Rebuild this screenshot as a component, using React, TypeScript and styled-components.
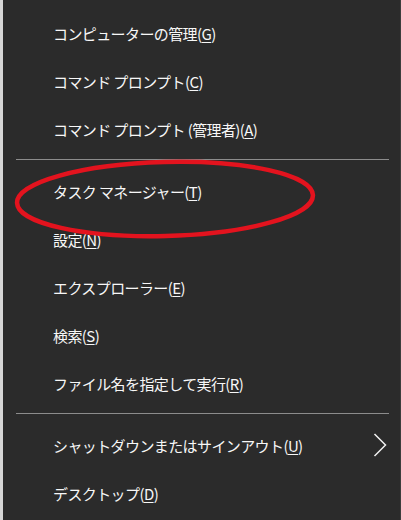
import styled, { createGlobalStyle } from "styled-components";

const GlobalStyle = createGlobalStyle`
    html, body {
        margin: 0;
        padding: 0;
        background: #2b2b2b;
    }
`;

const Menu = styled.div`
    position: relative;
    box-sizing: border-box;
    width: 401px;
    height: 520px;
    padding-top: 9px;
    background: #2b2b2b;
    border-left: 3px solid #d6d6d6;
    border-right: 1px solid #3d3d3d;
    font-family: "Noto Sans CJK JP", "Noto Sans", sans-serif;
    overflow: hidden;
`;

const Item = styled.div`
    display: flex;
    align-items: center;
    justify-content: space-between;
    height: 48px;
    padding: 0 13px 0 50px;
    color: #f7f7f7;
    font-size: 15px;
    letter-spacing: -0.6px;
    white-space: nowrap;
`;

const Key = styled.span`
    text-decoration: underline;
    text-underline-offset: 2px;
`;

const Separator = styled.div`
    height: 1px;
    margin: 6px 11px 7px 13px;
    background: #8c8c8c;
`;

const Highlight = styled.svg`
    position: absolute;
    left: 0;
    top: 0;
    pointer-events: none;
`;

type Entry = { label: string; key: string; submenu?: boolean };

const groups: Entry[][] = [
    [
        { label: "コンピューターの管理", key: "G" },
        { label: "コマンド プロンプト", key: "C" },
        { label: "コマンド プロンプト (管理者)", key: "A" },
    ],
    [
        { label: "タスク マネージャー", key: "T" },
        { label: "設定", key: "N" },
        { label: "エクスプローラー", key: "E" },
        { label: "検索", key: "S" },
        { label: "ファイル名を指定して実行", key: "R" },
    ],
    [
        { label: "シャットダウンまたはサインアウト", key: "U", submenu: true },
        { label: "デスクトップ", key: "D" },
    ],
];

const Chevron = () => (
    <svg width="14" height="24" viewBox="0 0 14 24">
        <path d="M1.5 1 L12.5 12 L1.5 23" fill="none" stroke="#f0f0f0" strokeWidth="1.5" />
    </svg>
);

const App = () => {
    return (
        <>
            <GlobalStyle />
            <Menu>
                {groups.map((group, gi) => (
                    <div key={gi}>
                        {gi > 0 && <Separator />}
                        {group.map((item) => (
                            <Item key={item.key}>
                                <span>
                                    {item.label}(<Key>{item.key}</Key>)
                                </span>
                                {item.submenu && <Chevron />}
                            </Item>
                        ))}
                    </div>
                ))}
                <Highlight width="401" height="520" viewBox="0 0 401 520">
                    <ellipse
                        cx="162"
                        cy="199"
                        rx="148"
                        ry="37"
                        fill="none"
                        stroke="#e3131e"
                        strokeWidth="4.5"
                        transform="rotate(-1.5 162 199)"
                    />
                </Highlight>
            </Menu>
        </>
    );
};

export default App;
